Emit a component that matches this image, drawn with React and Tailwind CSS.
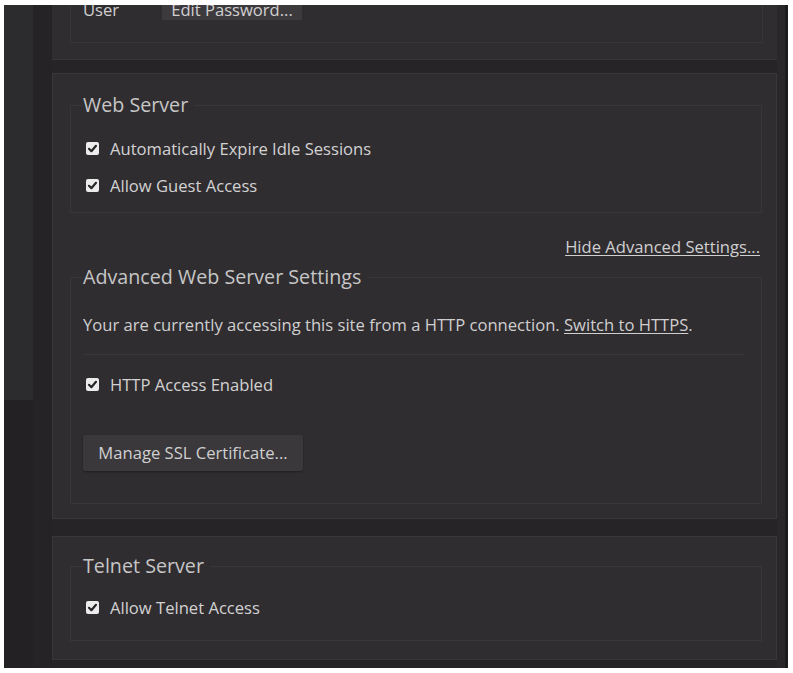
import React from "react";

const font = { fontFamily: '"Open Sans", "Noto Sans", sans-serif' };

function Check() {
  return (
    <svg width="13" height="13" viewBox="0 0 13 13" className="shrink-0">
      <rect x="0" y="0" width="13" height="13" rx="2" fill="#ececec" />
      <path d="M3 6.8 L5.4 9.2 L10 3.8" fill="none" stroke="#2a272b" strokeWidth="2.2" strokeLinecap="round" strokeLinejoin="round" />
    </svg>
  );
}

function CheckRow({ label }) {
  return (
    <div className="flex h-[37px] items-center pl-[3px]">
      <Check />
      <span className="ml-[11px] text-[16.6px] leading-[22px] text-[#d2d2d2]">{label}</span>
    </div>
  );
}

function Legend({ children }) {
  return (
    <legend className="px-0 pr-[6px] text-[19.7px] leading-[26px] text-[#c6c6c6]">{children}</legend>
  );
}

export default function App() {
  return (
    <div className="w-[793px] h-[673px] bg-white pt-[5px] pl-[4px]" style={font}>
      <div className="flex h-[663px] w-[784px] bg-[#262427]">
        {/* left sidebar */}
        <div className="flex w-[29px] flex-col">
          <div className="h-[395px] bg-[#2c2b2d]" />
          <div className="flex-1 bg-[#232124]" />
        </div>
        <div className="w-[19px] bg-[#252326]" />
        {/* main column */}
        <div className="flex w-[725px] flex-col">
          {/* panel 1 (cut) */}
          <div className="h-[55px] overflow-hidden border-b border-[#38353a] bg-[#302d31] pl-[18px] pr-[14px]">
            <div className="mt-[-20px] border border-t-0 border-[#38353a] pb-[21px] pl-[12px] pt-[5px]">
              <div className="flex items-start">
                <span className="w-[79px] pt-[9px] text-[16.6px] leading-[22px] text-[#cfcfcf]">User</span>
                <div className="h-[30px] w-[140px] rounded-[2px] bg-[#3d3a3e] pt-[9px] text-center text-[16.6px] leading-[22px] text-[#d0d0d0]">
                  Edit Password...
                </div>
              </div>
            </div>
          </div>

          <div className="h-[13px]" />

          {/* panel 2 */}
          <div className="border border-[#39363a] bg-[#302d31] pb-[14px] pl-[17px] pr-[14px] pt-[18px]">
            <fieldset className="border border-[#39363a] pb-[8px] pl-[12px] pr-[12px]">
              <Legend>Web Server</Legend>
              <div className="pt-[12px]">
                <CheckRow label="Automatically Expire Idle Sessions" />
                <CheckRow label="Allow Guest Access" />
              </div>
            </fieldset>
            <div className="mr-[2px] mt-[23px] flex justify-end">
              <span className="text-[16.6px] leading-[22px] text-[#cfcfcf] underline underline-offset-2">
                Hide Advanced Settings...
              </span>
            </div>
            <fieldset className="mt-[6px] border border-[#39363a] pb-[32px] pl-[12px] pr-[16px]">
              <Legend>Advanced Web Server Settings</Legend>
              <div className="pt-[24px] text-[16.6px] leading-[22px] text-[#cfcfcf]">
                Your are currently accessing this site from a HTTP connection.{" "}
                <span className="underline underline-offset-2">Switch to HTTPS</span>.
              </div>
              <div className="mt-[18px] h-px bg-[#3a373b]" />
              <div className="mt-[11px]">
                <CheckRow label="HTTP Access Enabled" />
              </div>
              <div className="mt-[32px] flex">
                <div className="flex h-[36px] w-[220px] items-center justify-center rounded-[2px] bg-[#3b383c] text-[16.6px] text-[#d0d0d0] shadow-[0_1px_2px_rgba(0,0,0,0.35)]">
                  Manage SSL Certificate...
                </div>
              </div>
            </fieldset>
          </div>

          <div className="h-[17px]" />

          {/* panel 3 */}
          <div className="border border-[#39363a] bg-[#302d31] pb-[18px] pl-[17px] pr-[14px] pt-[16px]">
            <fieldset className="border border-[#39363a] pb-[14px] pl-[12px] pr-[12px]">
              <Legend>Telnet Server</Legend>
              <div className="pt-[10px]">
                <CheckRow label="Allow Telnet Access" />
              </div>
            </fieldset>
          </div>
          <div className="flex-1" />
        </div>
        {/* right strip */}
        <div className="w-[8px] bg-[#29272a]" />
        <div className="w-[3px] bg-[#1b1a1c]" />
      </div>
    </div>
  );
}
